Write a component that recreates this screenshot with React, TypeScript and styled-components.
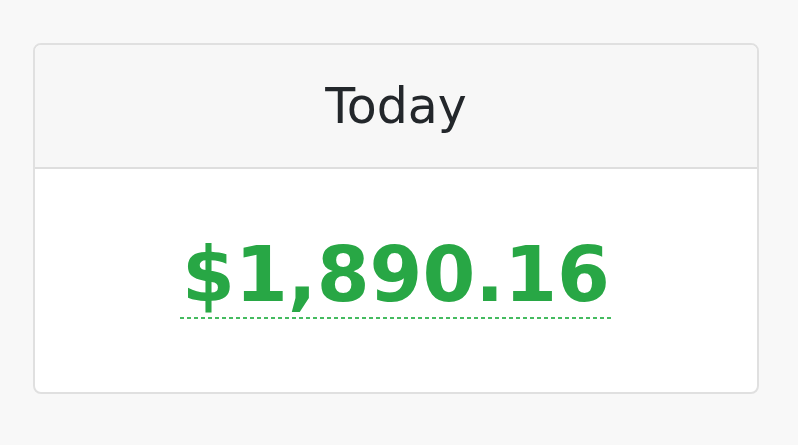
import { createGlobalStyle } from 'styled-components'
import styled from 'styled-components'

const GlobalStyle = createGlobalStyle`
  html, body {
    margin: 0;
    padding: 0;
    background: #f8f8f8;
    font-family: "DejaVu Sans", Verdana, sans-serif;
  }
`

const Page = styled.main`
  padding: 43px 39px 0 33px;
`

const Card = styled.section`
  display: flex;
  flex-direction: column;
  height: 351px;
  background: #fff;
  border: 2px solid #e0e0e0;
  border-radius: 8px;
  overflow: hidden;
  box-sizing: border-box;
`

const Header = styled.header`
  height: 124px;
  display: flex;
  align-items: center;
  justify-content: center;
  background: #f7f7f7;
  border-bottom: 2px solid #dedede;
  box-sizing: border-box;
`

const Title = styled.h2`
  margin: 0;
  font-size: 49px;
  font-weight: 400;
  color: #23272b;
  line-height: 1;
  padding-top: 1px;
`

const Body = styled.div`
  flex: 1;
  display: flex;
  align-items: center;
  justify-content: center;
`

const Amount = styled.span`
  font-size: 76px;
  font-weight: 700;
  color: #28a745;
  line-height: 1;
  padding: 0 2px 6px;
  margin-top: -6px;
  background-image: repeating-linear-gradient(
    to right,
    #45bb60 0 4px,
    transparent 4px 7px
  );
  background-size: 100% 2px;
  background-repeat: no-repeat;
  background-position: left bottom;
`

export default function App() {
  return (
    <>
      <GlobalStyle />
      <Page>
        <Card>
          <Header>
            <Title>Today</Title>
          </Header>
          <Body>
            <Amount title="Today's total">$1,890.16</Amount>
          </Body>
        </Card>
      </Page>
    </>
  )
}
